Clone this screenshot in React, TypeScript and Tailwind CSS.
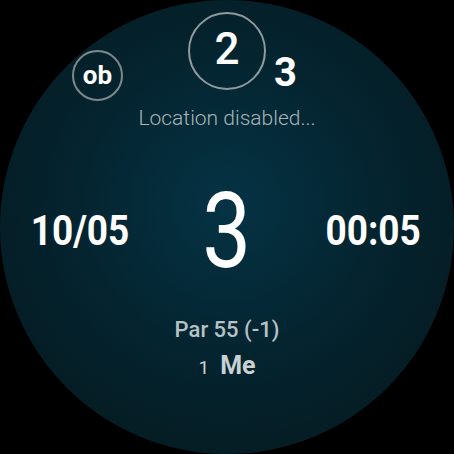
const font = { fontFamily: "Roboto, 'Liberation Sans', sans-serif" };

function Ring({ size, children }: { size: string; children: React.ReactNode }) {
    return (
        <div className={`${size} flex items-center justify-center rounded-full border-2 border-[#8f9a9e]`}>
            {children}
        </div>
    );
}

export default function App() {
    return (
        <div className="w-[454px] h-[454px] bg-black" style={font}>
            <div className="w-[454px] h-[454px] rounded-full bg-[radial-gradient(circle_at_50%_45%,#053345_0%,#04242f_45%,#06161b_100%)] flex flex-col items-center text-white">
                {/* top complications */}
                <div className="grid grid-cols-[1fr_auto_1fr] w-full pt-[12px]">
                    <div className="flex justify-end pr-[65px] pt-[38px]">
                        <div className="w-[51px] h-[51px] flex items-center justify-center rounded-full border-2 border-[#7d888c]">
                            <span className="text-[26px] font-bold leading-none -mt-[2px]">ob</span>
                        </div>
                    </div>
                    <Ring size="w-[78px] h-[78px]">
                        <span className="text-[44px] font-medium leading-none -mt-[4px]">2</span>
                    </Ring>
                    <div className="flex justify-start pl-[8px] pt-[41px]">
                        <span className="text-[40px] font-bold leading-none">3</span>
                    </div>
                </div>
                <div className="mt-[7px] text-[21px] font-light leading-none text-[#a9b6ba]">Location disabled...</div>

                {/* main row */}
                <div className="grid grid-cols-[1fr_auto_1fr] items-center w-full mt-[49px]">
                    <div className="flex justify-end pr-[61px]">
                        <span className="text-[42px] font-bold leading-none scale-x-[0.88]">10/05</span>
                    </div>
                    <span className="text-[106px] font-normal leading-none scale-x-[0.82]">3</span>
                    <div className="flex justify-start pl-[62px]">
                        <span className="text-[42px] font-bold leading-none scale-x-[0.88]">00:05</span>
                    </div>
                </div>

                <div className="mt-[35px] text-[22px] font-medium leading-none text-[#b7c2c6]">Par 55 (-1)</div>
                <div className="mt-[12px] flex items-baseline gap-[11px] text-[#c9d1d4] leading-none">
                    <span className="text-[19px]">1</span>
                    <span className="text-[25px] font-bold">Me</span>
                </div>
            </div>
        </div>
    );
}
